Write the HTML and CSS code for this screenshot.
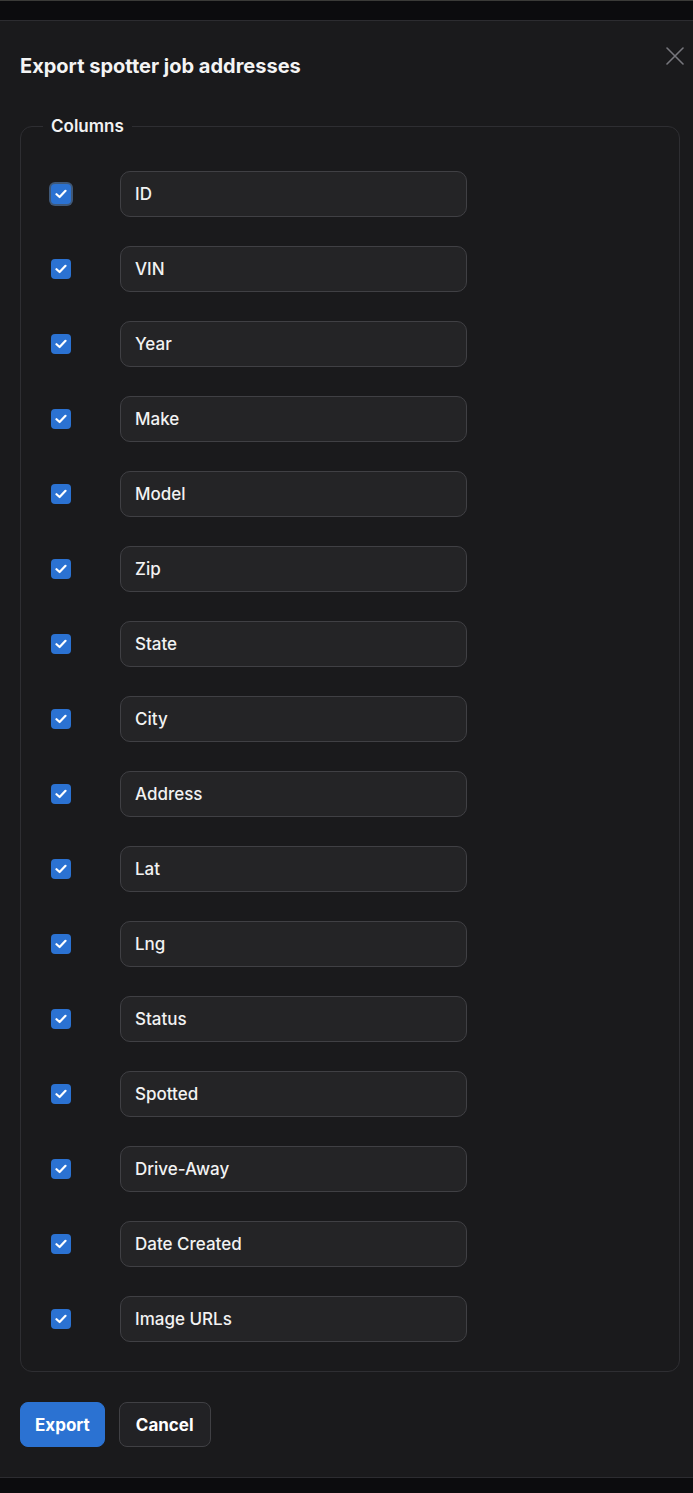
FILE: index.html
```html
<!DOCTYPE html>
<html lang="en">
<head>
  <meta charset="UTF-8" />
  <meta name="viewport" content="width=device-width, initial-scale=1.0"/>
  <title>Export spotter job addresses</title>
  <link rel="stylesheet" href="styles.css">
</head>
<body>

  <div class="modal">
    <div class="modal-head">
      <h2 class="modal-title">Export spotter job addresses</h2>
      <button class="close" aria-label="Close">
        <svg width="18" height="18" viewBox="0 0 18 18" fill="none" stroke="#77777d" stroke-width="1.6" stroke-linecap="round">
          <path d="M1 1 L17 17 M17 1 L1 17"/>
        </svg>
      </button>
    </div>

    <fieldset class="columns">
      <legend>Columns</legend>
      <div class="col-list" id="colList"></div>
    </fieldset>

    <div class="actions">
      <button class="btn btn-primary">Export</button>
      <button class="btn btn-ghost">Cancel</button>
    </div>
  </div>

  <script>
    const columns = ['ID', 'VIN', 'Year', 'Make', 'Model', 'Zip', 'State', 'City', 'Address',
      'Lat', 'Lng', 'Status', 'Spotted', 'Drive-Away', 'Date Created', 'Image URLs'];
    const list = document.getElementById('colList');

    columns.forEach((name, index) => {
      const row = document.createElement('div');
      row.className = 'col-row';
      row.innerHTML =
        '<span class="check' + (index === 0 ? ' focused' : '') + '">' +
        '<svg width="12" height="10" viewBox="0 0 12 10" fill="none" stroke="#fff" stroke-width="2.2" stroke-linecap="round" stroke-linejoin="round">' +
        '<path d="M1.5 5.2 L4.6 8 L10.5 1.8"/></svg></span>' +
        '<input type="text" class="col-input" value="' + name + '" />';
      list.appendChild(row);
    });
  </script>

</body>
</html>
```

FILE: styles.css
```css
body {
  margin: 0;
  padding-top: 19px;
  background-color: #0c0c0e;
  border-top: 1px solid #3b3b38;
  font-family: Inter, "Noto Sans", sans-serif;
  color: #f2f2f2;
  overflow: hidden;
}

.modal {
  width: 693px;
  box-sizing: border-box;
  padding: 32px 13px 30px 20px;
  background-color: #1a1a1c;
  border-top: 1px solid #2c2c30;
  border-bottom: 1px solid #2c2c30;
}

.modal-head {
  display: flex;
  justify-content: space-between;
  align-items: flex-start;
}

.modal-title {
  margin: 0;
  font-size: 20px;
  line-height: 26px;
  font-weight: 700;
  color: #f4f4f4;
}

.close {
  background: none;
  border: none;
  padding: 0;
  margin: -6px -4px 0 0;
  cursor: pointer;
  line-height: 0;
}

.columns {
  margin: 37px 0 0 0;
  padding: 35px 22px 29px 22px;
  border: 1px solid #2e2e32;
  border-radius: 12px;
}

.columns legend {
  padding: 0 8px;
  font-size: 17px;
  line-height: 20px;
  font-weight: 600;
  color: #f2f2f2;
}

.col-list {
  display: flex;
  flex-direction: column;
  gap: 29px;
}

.col-row {
  display: flex;
  align-items: center;
  gap: 49px;
  padding-left: 8px;
}

.check {
  width: 20px;
  height: 20px;
  border-radius: 4px;
  background-color: #2b72d2;
  display: flex;
  align-items: center;
  justify-content: center;
  flex-shrink: 0;
}

.check.focused {
  box-shadow: 0 0 0 2px #3f5878;
}

.col-input {
  width: 347px;
  height: 46px;
  box-sizing: border-box;
  padding: 0 14px;
  background-color: #242426;
  border: 1px solid #404044;
  border-radius: 10px;
  font-family: Inter, "Noto Sans", sans-serif;
  font-size: 17px;
  font-weight: 500;
  color: #f2f2f2;
  outline: none;
}

.actions {
  display: flex;
  gap: 14px;
  margin-top: 30px;
}

.btn {
  height: 45px;
  padding: 0 14px;
  border-radius: 8px;
  font-family: Inter, "Noto Sans", sans-serif;
  font-size: 17px;
  font-weight: 700;
  color: #fff;
  cursor: pointer;
}

.btn-primary {
  background-color: #2b72d2;
  border: 1px solid #2b72d2;
}

.btn-ghost {
  background-color: #222225;
  border: 1px solid #404044;
  padding: 0 16px;
}
```
